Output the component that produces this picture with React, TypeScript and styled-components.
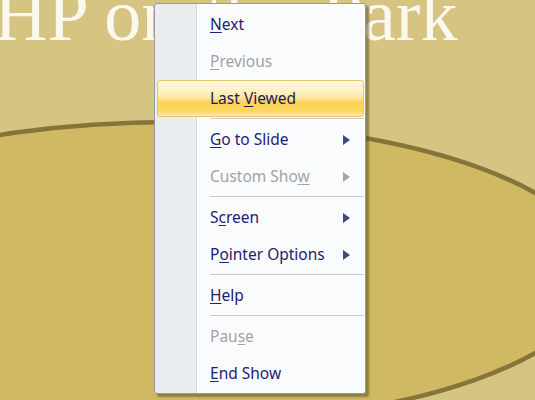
import React from "react";
import styled, { createGlobalStyle } from "styled-components";

const Global = createGlobalStyle`
  html, body { margin: 0; padding: 0; }
  body { width: 535px; height: 400px; overflow: hidden; background: #d6c380; }
`;

const Slide = styled.div`
  position: relative;
  width: 535px;
  height: 400px;
  overflow: hidden;
  background: #d6c482;
`;

const Backdrop = styled.svg`
  position: absolute;
  inset: 0;
`;

const Title = styled.div`
  position: absolute;
  left: -6px;
  top: -22px;
  font-family: "Liberation Serif", "Times New Roman", serif;
  font-size: 74px;
  line-height: 74px;
  color: #fbf8ee;
  white-space: nowrap;
`;

const TitleMid = styled.span`
  margin: 0 8px;
`;

const Menu = styled.div`
  position: absolute;
  left: 154px;
  top: 3px;
  width: 212px;
  box-sizing: border-box;
  padding: 2px 1px 1px 2px;
  border: 1px solid #9a9a9a;
  border-radius: 3px;
  box-shadow: 3px 3px 2px rgba(90, 75, 30, 0.55);
  background: linear-gradient(
    to right,
    #e9edf0 0,
    #e9edf0 41px,
    #d4d7da 41px,
    #d4d7da 42px,
    #ffffff 42px,
    #ffffff 43px,
    #fafbfd 43px
  );
  font-family: "Noto Sans", "Open Sans", sans-serif;
  font-size: 15.5px;
`;

const Item = styled.div<{ $disabled?: boolean; $active?: boolean }>`
  display: flex;
  align-items: center;
  justify-content: space-between;
  height: 37px;
  box-sizing: border-box;
  padding: 0 14px 2px 53px;
  border-radius: 3px;
  color: ${(p) => (p.$disabled ? "#a3a3a3" : p.$active ? "#1d1b4e" : "#1f2272")};
  ${(p) =>
    p.$active
      ? `
    border: 1px solid #e4c46e;
    padding-left: 52px;
    background: linear-gradient(
      to bottom,
      #fef8df 0%,
      #fdf0bd 35%,
      #fde39a 50%,
      #fcd358 60%,
      #fcd75f 85%,
      #fde9a6 100%
    );
  `
      : ""}
`;

const Key = styled.u`
  text-decoration: underline;
  text-underline-offset: 2px;
  text-decoration-thickness: 1px;
`;

const Separator = styled.div`
  height: 4px;
  margin-left: 53px;
  display: flex;
  flex-direction: column;
  justify-content: center;
  &::before {
    content: "";
    display: block;
    height: 1px;
    background: #c9c9c9;
  }
  &::after {
    content: "";
    display: block;
    height: 1px;
    background: #ffffff;
  }
`;

const Arrow = styled.span<{ $disabled?: boolean }>`
  width: 0;
  height: 0;
  margin-top: 2px;
  border-top: 5px solid transparent;
  border-bottom: 5px solid transparent;
  border-left: 7px solid ${(p) => (p.$disabled ? "#a6a6a6" : "#3c4a82")};
`;

type Entry =
  | { sep: true }
  | {
      sep?: false;
      pre: string;
      key: string;
      post: string;
      disabled?: boolean;
      active?: boolean;
      sub?: boolean;
    };

const entries: Entry[] = [
  { pre: "", key: "N", post: "ext" },
  { pre: "", key: "P", post: "revious", disabled: true },
  { pre: "Last ", key: "V", post: "iewed", active: true },
  { sep: true },
  { pre: "", key: "G", post: "o to Slide", sub: true },
  { pre: "Custom Sho", key: "w", post: "", disabled: true, sub: true },
  { sep: true },
  { pre: "S", key: "c", post: "reen", sub: true },
  { pre: "P", key: "o", post: "inter Options", sub: true },
  { sep: true },
  { pre: "", key: "H", post: "elp" },
  { sep: true },
  { pre: "Pau", key: "s", post: "e", disabled: true },
  { pre: "", key: "E", post: "nd Show" },
];

export default function App() {
  return (
    <Slide>
      <Global />
      <Backdrop width="535" height="400" viewBox="0 0 535 400">
        <ellipse cx="173" cy="273" rx="427" ry="151" fill="#cfba63" stroke="#87743a" strokeWidth="4.5" />
      </Backdrop>
      <Title>
        HP on <TitleMid>the</TitleMid> Park
      </Title>
      <Menu>
        {entries.map((e, i) =>
          e.sep ? (
            <Separator key={i} />
          ) : (
            <Item key={i} $disabled={e.disabled} $active={e.active}>
              <span>
                {e.pre}
                <Key>{e.key}</Key>
                {e.post}
              </span>
              {e.sub && <Arrow $disabled={e.disabled} />}
            </Item>
          )
        )}
      </Menu>
    </Slide>
  );
}
